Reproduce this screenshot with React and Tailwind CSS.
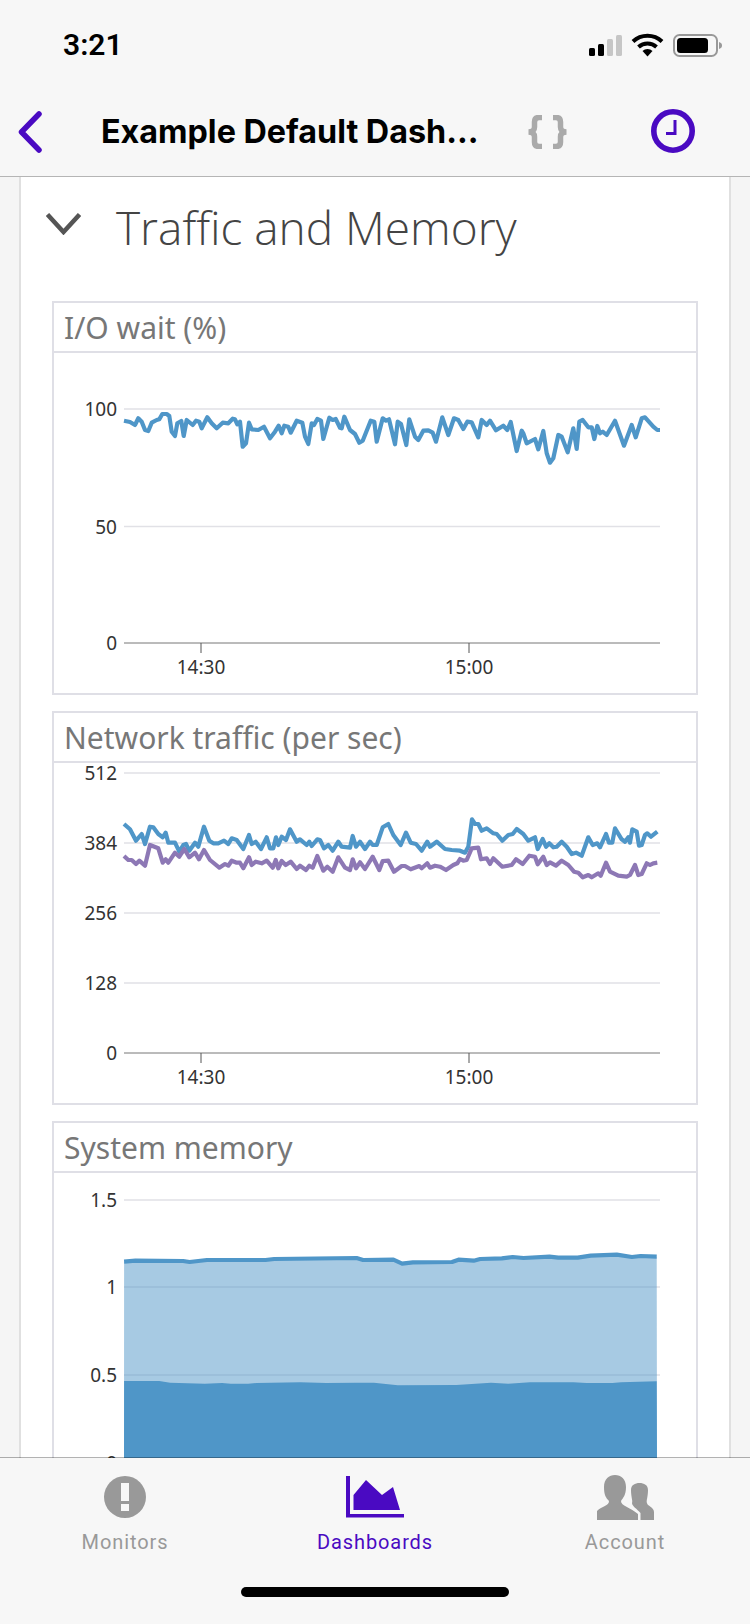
import React from "react";

const PURPLE = "#4a0ac2";
const BLUE = "#4f96c8";
const VIOLET = "#8d78b5";
const GRID = "#e1e1e6";

// traced from zoomed crops, converted to page pixels below
const scale = (raw, ox, oy, sx = 3) =>
  raw
    .trim()
    .split(/\s+/)
    .map((p) => {
      const [x, y] = p.split(",").map(Number);
      return `${(ox + x / sx).toFixed(1)},${(oy + y / 3).toFixed(1)}`;
    })
    .join(" ");

const IO_LINE = [
  scale(
    `252,392 270,396 285,405 295,385 305,395 315,420 325,423 335,398 350,390 358,388 367,372 380,372 388,378 395,425 405,438 412,400 424,393 431,438 440,390 458,405 468,392 478,395 485,415 502,382 515,400 530,415 548,398 565,400 578,386 585,388 592,403 600,395 608,470 618,460 627,398 635,418 655,420 672,410 690,445 705,425 716,407 725,430 733,407 745,410 752,428 770,392 787,398 795,440 805,462 815,400 822,405 832,387 843,392 850,447 868,383 878,390 887,387 900,413 905,415 913,380 930,420 945,432 958,458 968,452 992,392 1003,395`,
    40,
    290
  ),
  scale(
    `20,455 38,385 48,392 57,388 75,463 83,395 93,402 109,465 118,388 135,440 145,450 160,422 175,421 188,428 198,455 217,382 235,435 252,385 265,390 280,417 292,395 305,397 325,442 335,390 350,405 360,392 378,421 400,407 412,420 422,396 440,483 455,422 460,430 470,460 495,447 505,478 520,423 530,490 540,518 550,505 565,435 575,440 593,487 610,415 620,477 628,395 638,390 655,412 665,412 673,447 682,408 690,430 698,425 710,435 735,392 762,467 785,405 797,442 815,385 825,382 850,410 862,420 870,420`,
    370,
    290
  ),
].join(" ");

const NET_BLUE = [
  scale(
    `222,372 240,388 258,422 275,402 285,432 300,380 310,382 325,402 338,412 347,398 355,428 375,428 388,455 400,435 408,432 418,452 435,428 445,440 462,380 478,422 490,430 505,430 522,422 535,432 545,415 560,420 580,447 597,405 605,432 617,425 633,447 650,412 660,445 670,445 678,412 685,435 695,410 708,420 720,388 740,425 750,418 770,435 778,425 785,438 802,418 810,420 822,445 835,435 848,452 865,425 875,440 900,443 908,408 918,440 930,425 945,447`,
    50,
    700
  ),
  scale(
    `0,425 8,435 20,435 38,382 55,372 70,405 92,435 108,398 122,428 138,432 155,452 172,425 180,440 200,425 225,447 245,450 270,452 285,458 295,440 306,358 315,372 325,372 335,392 350,385 370,400 380,402 397,422 415,405 428,402 440,387 460,402 475,422 495,412 503,447 518,417 528,440 538,430 550,442 560,440 575,425 590,440 605,462 618,458 635,467 655,412 668,435 682,430 690,442 708,402 717,428 727,428 735,385 755,418 765,425 775,412 780,428 787,388 800,395 807,437 815,435 825,405 832,400 843,410 862,395`,
    370,
    700
  ),
].join(" ");

const NET_VIOLET = [
  scale(
    `222,468 235,480 245,480 258,492 268,482 285,497 300,435 325,445 338,488 347,478 355,488 375,458 388,470 403,447 418,472 435,458 447,478 462,450 480,480 508,503 525,492 535,497 545,482 560,488 570,488 580,505 597,472 605,495 617,485 635,490 650,482 668,503 677,480 685,505 695,483 707,495 722,485 740,507 750,497 768,510 778,497 788,503 802,468 820,512 832,500 848,515 865,472 885,503 900,510 908,478 918,505 930,487 945,507`,
    50,
    700
  ),
  scale(
    `8,470 28,510 38,483 55,482 72,515 95,498 105,498 122,508 148,498 155,505 172,490 180,503 195,497 210,500 228,510 250,495 262,490 270,477 280,482 290,480 305,445 325,443 333,478 350,475 360,492 370,475 397,500 425,495 438,478 458,492 478,467 495,470 503,493 520,470 530,495 540,487 558,497 575,482 595,495 612,515 625,518 638,532 655,525 665,532 685,520 692,527 708,488 720,515 745,527 770,530 780,525 795,495 805,525 815,522 830,490 840,495 850,490 862,488`,
    370,
    700
  ),
].join(" ");

const MEM_TOP = scale(
  `194,455 220,452 330,453 345,456 385,450 520,450 540,447 730,444 745,450 815,449 835,461 860,457 950,456 965,449 1000,452 1015,447 1065,445 1090,441 1115,444 1175,440 1195,443 1240,443 1270,437 1330,434 1365,441 1385,438 1422,440`,
  40,
  1110,
  2.306
);
const MEM_DARK = scale(
  `194,813 275,813 300,818 380,821 420,819 440,821 480,821 500,819 600,817 660,819 730,818 770,818 825,826 960,825 1040,818 1080,821 1130,817 1230,817 1260,819 1320,819 1340,817 1422,814`,
  40,
  1110,
  2.306
);

function Axis({ rows, zero, ticks }) {
  return (
    <>
      {rows.map(([label, y]) => (
        <g key={label}>
          <line x1="124" x2="660" y1={y} y2={y} stroke={y === zero ? "#777777" : GRID} strokeWidth={y === zero ? 1 : 1.4} />
          <text x="117" y={y + 7} textAnchor="end" fontSize="19" fill="#333333">
            {label}
          </text>
        </g>
      ))}
      {ticks &&
        ticks.map(([label, x]) => (
          <g key={label}>
            <line x1={x} x2={x} y1={zero} y2={zero + 10} stroke="#555555" strokeWidth="1" />
            <text x={x} y={zero + 31} textAnchor="middle" fontSize="19" fill="#333333">
              {label}
            </text>
          </g>
        ))}
    </>
  );
}

function Panel({ title, top, children }) {
  return (
    <section className="h-[394px] shrink-0 border-2 border-[#dfdfe6]">
      <h3 className="h-[50px] border-b-2 border-[#dfdfe6] pl-[10px] text-[30px] leading-[49px] font-normal text-[#777777] font-['Noto_Sans',sans-serif]">
        {title}
      </h3>
      <svg
        className="block overflow-visible font-['Noto_Sans',sans-serif]"
        width="642"
        height="340"
        viewBox={`54 ${top} 642 340`}
      >
        {children}
      </svg>
    </section>
  );
}

function StatusBar() {
  return (
    <div className="flex h-[88px] items-center pt-[2px] pl-[63px] pr-[27px]">
      <span className="text-[30px] leading-none font-semibold text-black font-['Roboto',sans-serif]">3:21</span>
      <svg className="ml-auto" width="134" height="24" viewBox="589 33 134 24">
        <rect x="589" y="48" width="6" height="8" rx="1.5" fill="#000" />
        <rect x="598" y="44" width="6" height="12" rx="1.5" fill="#000" />
        <rect x="607" y="39" width="6" height="17" rx="1.5" fill="#c6c6c6" />
        <rect x="616" y="35" width="6" height="21" rx="1.5" fill="#c6c6c6" />
        <path d="M633 41.5 A21 21 0 0 1 662 41.5" fill="none" stroke="#000" strokeWidth="4" />
        <path d="M638.5 47 A13.5 13.5 0 0 1 656.5 47" fill="none" stroke="#000" strokeWidth="4" />
        <path d="M642.5 51 L647.5 56.5 L652.5 51 A7 7 0 0 0 642.5 51 Z" fill="#000" />
        <rect x="674" y="35" width="43" height="21" rx="5.5" fill="none" stroke="#999999" strokeWidth="2" />
        <rect x="677" y="38" width="31" height="15" rx="3.5" fill="#000" />
        <path d="M719 42 C721.5 43 722 44 722 45.5 C722 47 721.5 48 719 49 Z" fill="#999999" />
      </svg>
    </div>
  );
}

function NavBar() {
  return (
    <div className="flex h-[88px] items-center pl-[18px]">
      <svg width="24" height="42" viewBox="0 0 24 42" fill="none" stroke={PURPLE} strokeWidth="5.5" strokeLinecap="round" strokeLinejoin="round">
        <path d="M21 3 L3.5 21 L21 39" />
      </svg>
      <h1 className="ml-[59px] w-[376px] whitespace-nowrap text-[32.3px] leading-none font-bold text-black font-['Inter',sans-serif]">
        Example Default Dash...
      </h1>
      <svg className="ml-[49px]" width="43" height="34" viewBox="526 115 43 34" fill="none" stroke="#aaaaaa" strokeWidth="5.5">
        <path d="M542 117.5 H539 Q534.5 117.5 534.5 122 V127 Q534.5 132 528.5 132 Q534.5 132 534.5 137 V142 Q534.5 146.5 539 146.5 H542" />
        <path d="M553 117.5 H556 Q560.5 117.5 560.5 122 V127 Q560.5 132 566.5 132 Q560.5 132 560.5 137 V142 Q560.5 146.5 556 146.5 H553" />
      </svg>
      <svg className="ml-[82px] -mt-[2px]" width="44" height="44" viewBox="0 0 44 44" fill="none" stroke={PURPLE}>
        <circle cx="22" cy="22" r="19.2" strokeWidth="5.6" />
        <path d="M24 11 V24.5 H15" strokeWidth="3" />
      </svg>
    </div>
  );
}

function TabItem({ label, active, children }) {
  return (
    <div className="flex w-1/3 flex-col items-center">
      <div className="flex h-[46px] items-center justify-center">{children}</div>
      <span
        className={`mt-[10px] text-[20px] leading-[24px] tracking-[0.9px] font-['Roboto',sans-serif] ${
          active ? "text-[#4a0ac2]" : "text-[#999999]"
        }`}
      >
        {label}
      </span>
    </div>
  );
}

function TabBar() {
  return (
    <footer className="relative z-10 -mt-px flex h-[167px] shrink-0 flex-col border-t border-black/30 bg-[#f7f7f7] bg-clip-padding pt-[16px]">
      <div className="flex">
        <TabItem label="Monitors">
          <svg width="42" height="42" viewBox="0 0 42 42">
            <circle cx="21" cy="21" r="21" fill="#999999" />
            <rect x="17" y="7" width="8" height="18" fill="#f7f7f7" />
            <rect x="17" y="28" width="8" height="7" fill="#f7f7f7" />
          </svg>
        </TabItem>
        <TabItem label="Dashboards" active>
          <svg width="58" height="42" viewBox="345 1476 58 42" fill={PURPLE}>
            <path d="M345 1476 H349 V1514 H403 V1517.5 H345 Z" />
            <path d="M352.5 1495 L365 1480 L381 1495 L392 1487 L399 1510 H352.5 Z" />
          </svg>
        </TabItem>
        <TabItem label="Account">
          <svg width="57" height="45" viewBox="0 0 57 45" fill="#999999">
            <path d="M0 45 V36 C5 31 12 31 12 26 C9 23 7 20 7 12 C7 4 12 0 18 0 C24 0 29 4 29 12 C29 20 26 23 24 26 C24 31 33 32 41 39 V45 Z" />
            <path d="M43.5 45 V38 C40 34 35 31 35 28 C36 26 34 22 34 15 C34 10 38 8 42.5 8 C47 8 51 10 51 15 C51 22 49 26 50 28 C50 31 57 32 57 37 V45 Z" />
          </svg>
        </TabItem>
      </div>
      <div className="mx-auto mt-[33px] h-[10px] w-[268px] rounded-full bg-black" />
    </footer>
  );
}

export default function App() {
  return (
    <div className="flex h-[1624px] w-[750px] flex-col overflow-hidden bg-[#f5f5f5]">
      <header className="h-[177px] shrink-0 border-b border-[#b5b5b5] bg-[#f7f7f7]">
        <StatusBar />
        <NavBar />
      </header>

      <main className="min-h-0 flex-1 overflow-hidden px-[19px]">
        <div className="h-full border-x-2 border-[#e0e0e0] bg-white px-[31px]">
          <div className="flex h-[124px] items-start">
            <svg className="mt-[36px] -ml-[6px]" width="35" height="22" viewBox="0 0 35 22" fill="none" stroke="#555555" strokeWidth="4.5">
              <path d="M1.5 1.5 L17.5 19 L33.5 1.5" />
            </svg>
            <h2 className="ml-[35px] mt-[19px] text-[46px] leading-[62px] font-light text-[#444444] font-['Open_Sans',sans-serif]">
              Traffic and Memory
            </h2>
          </div>

          <div className="flex flex-col gap-[16px]">
            <Panel title="I/O wait (%)" top={353}>
              <Axis
                rows={[["100", 409], ["50", 526.5], ["0", 643]]}
                zero={643}
                ticks={[["14:30", 201], ["15:00", 469]]}
              />
              <polyline points={IO_LINE} fill="none" stroke={BLUE} strokeWidth="4.2" strokeLinejoin="round" />
            </Panel>

            <Panel title="Network traffic (per sec)" top={763}>
              <Axis
                rows={[["512", 773], ["384", 843], ["256", 913], ["128", 983], ["0", 1053]]}
                zero={1053}
                ticks={[["14:30", 201], ["15:00", 469]]}
              />
              <polyline points={NET_BLUE} fill="none" stroke={BLUE} strokeWidth="4.2" strokeLinejoin="round" />
              <polyline points={NET_VIOLET} fill="none" stroke={VIOLET} strokeWidth="4.2" strokeLinejoin="round" />
            </Panel>

            <Panel title="System memory" top={1173}>
              <Axis rows={[["1.5", 1200], ["1", 1287], ["0.5", 1375], ["0", 1463]]} zero={1463} />
              <polygon points={`124,1463 ${MEM_TOP} 657,1463`} fill={BLUE} fillOpacity="0.5" />
              <polygon points={`124,1463 ${MEM_DARK} 657,1463`} fill={BLUE} />
              <polyline points={MEM_TOP} fill="none" stroke={BLUE} strokeWidth="4.2" strokeLinejoin="round" />
            </Panel>
          </div>
        </div>
      </main>

      <TabBar />
    </div>
  );
}
